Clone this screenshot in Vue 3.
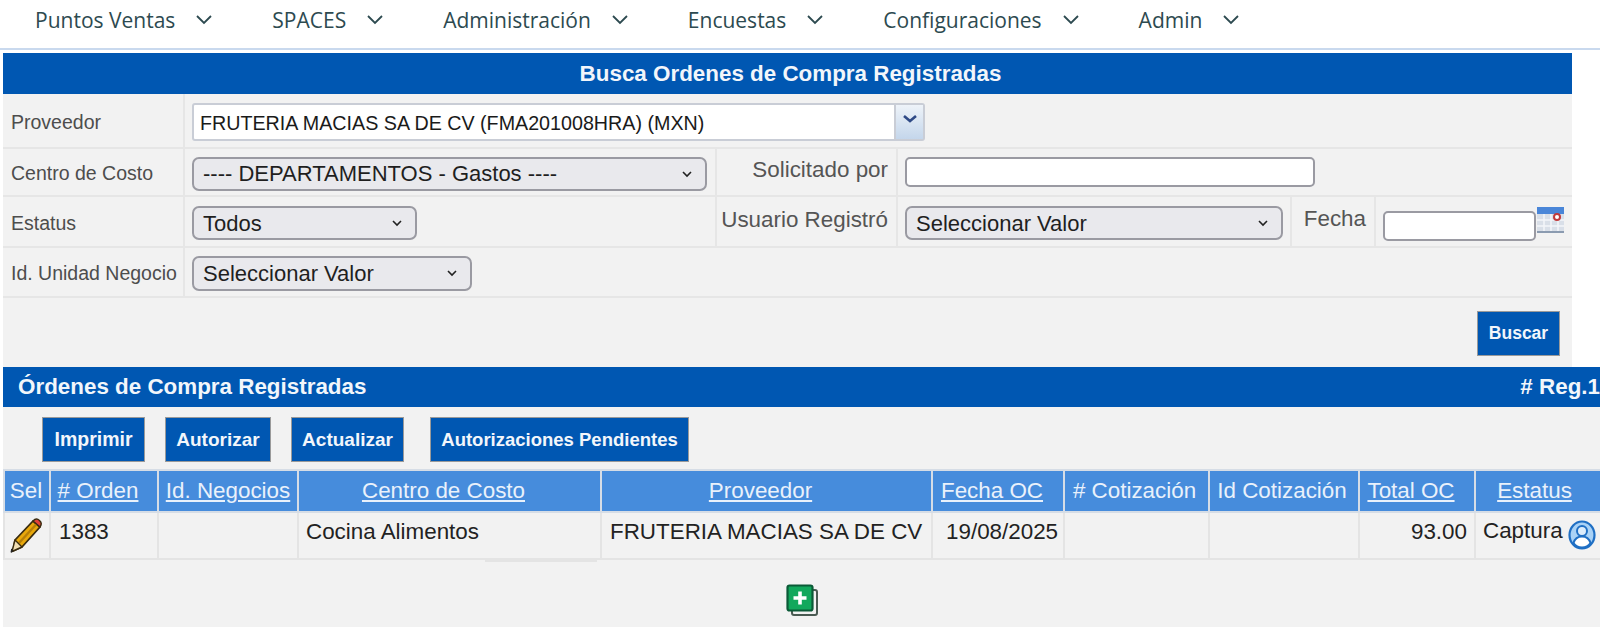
<script setup>
const menus = ['Puntos Ventas', 'SPACES', 'Administración', 'Encuestas', 'Configuraciones', 'Admin']

const columns = [
  { label: 'Sel' },
  { label: '# Orden', link: true },
  { label: 'Id. Negocios', link: true },
  { label: 'Centro de Costo', link: true },
  { label: 'Proveedor', link: true },
  { label: 'Fecha OC', link: true },
  { label: '# Cotización' },
  { label: 'Id Cotización' },
  { label: 'Total OC', link: true },
  { label: 'Estatus', link: true }
]

const actions = ['Imprimir', 'Autorizar', 'Actualizar', 'Autorizaciones Pendientes']
</script>

<template>
  <div class="page">
    <nav class="topnav">
      <a v-for="m in menus" :key="m" class="nav-item">
        <span>{{ m }}</span>
        <svg class="nav-chev" viewBox="0 0 18 12"><path d="M2 2l7 7 7-7" fill="none" stroke="#2d4a50" stroke-width="1.8" /></svg>
      </a>
    </nav>

    <section class="search">
      <h1 class="bar-title">Busca Ordenes de Compra Registradas</h1>

      <div class="row row-prov">
        <label class="cell lbl">Proveedor</label>
        <div class="cell ctl">
          <div class="combo">
            <span class="combo-text">FRUTERIA MACIAS SA DE CV (FMA201008HRA) (MXN)</span>
            <span class="combo-btn">
              <svg viewBox="0 0 16 10" width="16" height="10"><path d="M2 2l6 5 6-5" fill="none" stroke="#2f4a86" stroke-width="2.6" /></svg>
            </span>
          </div>
        </div>
      </div>

      <div class="row row-centro">
        <label class="cell lbl">Centro de Costo</label>
        <div class="cell ctl">
          <div class="sel-wrap sel-centro">
            <select class="sel"><option>---- DEPARTAMENTOS - Gastos ----</option></select>
            <svg class="sel-chev" viewBox="0 0 10 7"><path d="M1 1l4 4 4-4" fill="none" stroke="#222" stroke-width="1.6" /></svg>
          </div>
        </div>
        <label class="cell lbl-r">Solicitado por</label>
        <div class="cell ctl">
          <input class="txt txt-sol" type="text" />
        </div>
      </div>

      <div class="row row-estatus">
        <label class="cell lbl">Estatus</label>
        <div class="cell ctl">
          <div class="sel-wrap sel-estatus">
            <select class="sel"><option>Todos</option></select>
            <svg class="sel-chev" viewBox="0 0 10 7"><path d="M1 1l4 4 4-4" fill="none" stroke="#222" stroke-width="1.6" /></svg>
          </div>
        </div>
        <label class="cell lbl-r">Usuario Registró</label>
        <div class="cell ctl">
          <div class="sel-wrap sel-usuario">
            <select class="sel"><option>Seleccionar Valor</option></select>
            <svg class="sel-chev" viewBox="0 0 10 7"><path d="M1 1l4 4 4-4" fill="none" stroke="#222" stroke-width="1.6" /></svg>
          </div>
        </div>
        <label class="cell lbl-r">Fecha</label>
        <div class="cell ctl ctl-fecha">
          <input class="txt txt-fecha" type="text" />
          <svg class="cal" viewBox="0 0 27 26">
            <rect width="27" height="26" fill="#d9dfe8" />
            <rect width="27" height="7" fill="#4a86d8" />
            <path d="M0 13h27M0 19h27M7 7v19M14 7v19M21 7v19" stroke="#f4f6f9" stroke-width="1.5" />
            <circle cx="20" cy="10" r="3" fill="#fff" stroke="#c0393b" stroke-width="2" />
            <rect y="24" width="27" height="2" fill="#8b9bb0" />
          </svg>
        </div>
      </div>

      <div class="row row-unidad">
        <label class="cell lbl">Id. Unidad Negocio</label>
        <div class="cell ctl">
          <div class="sel-wrap sel-unidad">
            <select class="sel"><option>Seleccionar Valor</option></select>
            <svg class="sel-chev" viewBox="0 0 10 7"><path d="M1 1l4 4 4-4" fill="none" stroke="#222" stroke-width="1.6" /></svg>
          </div>
        </div>
      </div>

      <div class="search-foot">
        <button class="btn btn-buscar">Buscar</button>
      </div>
    </section>

    <section class="results">
      <div class="bar-results">
        <span>Órdenes de Compra Registradas</span>
        <span># Reg.1</span>
      </div>

      <div class="actions">
        <button v-for="a in actions" :key="a" class="btn">{{ a }}</button>
      </div>

      <table class="grid">
        <colgroup>
          <col style="width: 46px" />
          <col style="width: 108px" />
          <col style="width: 140px" />
          <col style="width: 303px" />
          <col style="width: 331px" />
          <col style="width: 132px" />
          <col style="width: 145px" />
          <col style="width: 150px" />
          <col style="width: 116px" />
          <col style="width: 126px" />
        </colgroup>
        <thead>
          <tr>
            <th v-for="c in columns" :key="c.label">
              <a v-if="c.link" class="th-link">{{ c.label }}</a>
              <template v-else>{{ c.label }}</template>
            </th>
          </tr>
        </thead>
        <tbody>
          <tr>
            <td class="td-sel">
              <svg class="pencil" viewBox="0 0 36 36" width="36" height="36">
                <path d="M8 22L26 3l7 6-18 20-9 4z" fill="#e8a80c" stroke="#3a2c10" stroke-width="1.800" stroke-linejoin="round" />
                <path d="M12 25L29.500 6" stroke="#b77f08" stroke-width="2.400" />
                <path d="M26 3c2-2.200 4.500-2.400 6.500-.6 2 1.800 2.200 4.300.5 6.600z" fill="#e2413a" stroke="#3a2c10" stroke-width="1.400" />
                <path d="M8 22l7 7-10 4.500z" fill="#f1dfb4" stroke="#3a2c10" stroke-width="1.400" stroke-linejoin="round" />
                <path d="M5.500 33.500l-1.500.8.7-3.400z" fill="#222" stroke="#222" />
              </svg>
            </td>
            <td>1383</td>
            <td></td>
            <td class="td-centro">Cocina Alimentos</td>
            <td>FRUTERIA MACIAS SA DE CV</td>
            <td class="td-fecha">19/08/2025</td>
            <td></td>
            <td></td>
            <td class="td-num">93.00</td>
            <td class="td-est">
              <span>Captura</span>
              <svg class="user" viewBox="0 0 28 30" width="28" height="30">
                <ellipse cx="14" cy="15" rx="12.500" ry="13.500" fill="#a9d2f6" stroke="#1f6fc4" stroke-width="2.200" />
                <circle cx="14" cy="11" r="5" fill="#dcecfb" stroke="#1f6fc4" stroke-width="2" />
                <path d="M5.500 23c1.500-5 4.500-6.500 8.500-6.500s7 1.500 8.500 6.500c-2 3-5 4.500-8.500 4.500s-6.500-1.500-8.500-4.500z" fill="#fff" stroke="#1f6fc4" stroke-width="2" />
              </svg>
            </td>
          </tr>
        </tbody>
      </table>

      <div class="add-wrap">
        <svg class="add" viewBox="0 0 32 32" width="32" height="32">
          <rect x="6" y="6" width="25" height="25" rx="2" fill="#f2f2f2" stroke="#4a5a52" stroke-width="2" />
          <rect x="1.500" y="1.500" width="25" height="25" rx="2" fill="#12a85c" stroke="#0b5a37" stroke-width="2.200" />
          <path d="M14 7.500v13M7.500 14h13" stroke="#fff" stroke-width="3.600" />
        </svg>
      </div>
    </section>
  </div>
</template>

<style>
html, body { background: #fff; overflow: hidden; }
</style>

<style scoped>
.page {
  width: 1600px;
  height: 627px;
  overflow: hidden;
  font-family: "Liberation Sans", Arial, sans-serif;
  color: #222;
}

.topnav {
  display: flex;
  align-items: center;
  height: 50px;
  padding: 0 0 8px 35px;
  box-sizing: border-box;
  gap: 59px;
  border-bottom: 2px solid #c9d9ee;
  font-family: "Open Sans", sans-serif;
  font-size: 21px;
  color: #2d4a50;
}
.nav-item { display: flex; align-items: center; gap: 20px; }
.nav-chev { width: 18px; height: 12px; }

.search {
  width: 1569px;
  margin: 3px 0 0 3px;
  background: #f2f2f2;
}
.bar-title {
  margin: 0;
  height: 41px;
  padding-left: 6px;
  line-height: 41px;
  background: #0057b2;
  color: #f2f6fb;
  font-size: 22.400px;
  font-weight: bold;
  text-align: center;
}

.row { display: grid; border-bottom: 2px solid #e6e6e6; box-sizing: border-box; }
.row-prov { height: 55px; grid-template-columns: 182px 1fr; }
.row-centro { height: 48px; grid-template-columns: 182px 532px 181px 1fr; }
.row-estatus { height: 51px; grid-template-columns: 182px 532px 181px 394px 84px 1fr; }
.row-unidad { height: 50px; grid-template-columns: 182px 1fr; }

.cell { border-right: 2px solid #e6e6e6; display: flex; align-items: center; box-sizing: border-box; }
.cell:last-child { border-right: 0; }
.lbl { padding: 3px 0 0 8px; font-size: 19.500px; color: #4d4d4d; white-space: nowrap; }
.lbl-r { justify-content: flex-end; padding: 0 8px 4px 0; font-size: 22.400px; color: #555; white-space: nowrap; }
.row-estatus .lbl-r:nth-of-type(3) { padding-bottom: 6px; }
.ctl { padding: 3px 0 0 7px; }
.ctl-fecha { align-items: flex-start; padding-top: 14px; }

.combo {
  display: flex;
  width: 733px;
  height: 38px;
  border: 2px solid #c9cdd6;
  border-radius: 3px;
  box-sizing: border-box;
  background: #fff;
  font-size: 19.700px;
  color: #1a1a1a;
}
.combo-text { flex: 1; padding-left: 6px; line-height: 36px; white-space: nowrap; }
.combo-btn {
  width: 29px;
  display: flex;
  align-items: center;
  justify-content: center;
  padding-bottom: 6px;
  box-sizing: border-box;
  background: linear-gradient(#eef3f9, #c4d6eb);
  border-left: 2px solid #c9cdd6;
}

.sel-wrap { position: relative; display: flex; height: 34px; }
.sel {
  width: 100%;
  box-sizing: border-box;
  appearance: none;
  border: 2px solid #9a9aa2;
  border-radius: 7px;
  background-color: #e9e9ed;
  font-family: "Liberation Sans", Arial, sans-serif;
  font-size: 22px;
  color: #1f1f1f;
  padding-left: 9px;
}
.sel-chev {
  position: absolute;
  right: 15px;
  top: 14px;
  width: 10px;
  height: 7px;
}
.sel-centro { width: 515px; }
.sel-estatus { width: 225px; }
.sel-usuario { width: 378px; }
.sel-unidad { width: 280px; height: 35px; }

.txt {
  height: 30px;
  box-sizing: border-box;
  border: 2px solid #9a9aa2;
  border-radius: 5px;
  background: #fff;
  outline: none;
}
.txt-sol { width: 410px; margin-bottom: 3px; }
.txt-fecha { width: 153px; }
.cal { width: 27px; height: 26px; margin: -4px 0 0 1px; flex: none; }

.search-foot {
  height: 69px;
  display: flex;
  justify-content: flex-end;
  padding: 13px 12px 0 0;
  box-sizing: border-box;
}

.btn {
  height: 45px;
  padding: 0;
  border: 1px solid #9a9a9a;
  background: #0057b2;
  color: #f2f6fb;
  font-family: "Liberation Sans", Arial, sans-serif;
  font-size: 19px;
  font-weight: bold;
  white-space: nowrap;
}
.btn-buscar { width: 83px; font-size: 17.500px; }

.results { margin-left: 3px; background: #f2f2f2; height: 260px; }
.bar-results {
  display: flex;
  justify-content: space-between;
  height: 40px;
  padding: 0 0 0 15px;
  background: #0057b2;
  color: #f2f6fb;
  font-size: 22.400px;
  font-weight: bold;
  line-height: 40px;
}

.actions {
  display: flex;
  gap: 20px;
  height: 62px;
  padding: 10px 0 0 39px;
  box-sizing: border-box;
}
.actions .btn:nth-child(1) { width: 103px; font-size: 19.500px; }
.actions .btn:nth-child(2) { width: 106px; }
.actions .btn:nth-child(3) { width: 113px; }
.actions .btn:nth-child(4) { width: 259px; margin-left: 6px; font-size: 18.500px; }

.grid {
  width: 1597px;
  table-layout: fixed;
  border-collapse: collapse;
  font-size: 22.400px;
}
.grid th {
  height: 40px;
  padding: 0 12px 0 0;
  background: #468cdc;
  color: #e9f1fb;
  font-weight: normal;
  text-align: center;
  border: 2px solid #d6dde6;
  white-space: nowrap;
}
.grid th:nth-child(1) { padding-right: 2px; }
.grid th:nth-child(3) { padding-right: 0; }
.grid th:nth-child(7), .grid th:nth-child(8) { padding-right: 4px; }
.grid th:nth-child(10) { padding-right: 7px; }
.th-link { text-decoration: underline; }
.grid td {
  height: 47px;
  padding: 0 0 7px 8px;
  box-sizing: border-box;
  border: 2px solid #e4e4e4;
  white-space: nowrap;
  color: #222;
}
.grid td.td-sel { padding: 0 0 0 2px; }
.pencil { display: block; }
.grid td.td-centro { position: relative; padding-left: 7px; }
.td-centro::after {
  content: "";
  position: absolute;
  right: 3px;
  bottom: -4px;
  width: 112px;
  height: 2px;
  background: #e4e4e4;
}
.grid td.td-fecha { padding-left: 13px; }
.grid td.td-num { text-align: right; padding-right: 7px; }
.grid td.td-est { padding: 0 0 3px 7px; }
.td-est span { vertical-align: 3px; }
.user { vertical-align: middle; margin-left: 5px; }

.add-wrap { display: flex; justify-content: center; padding-top: 24px; }
</style>
